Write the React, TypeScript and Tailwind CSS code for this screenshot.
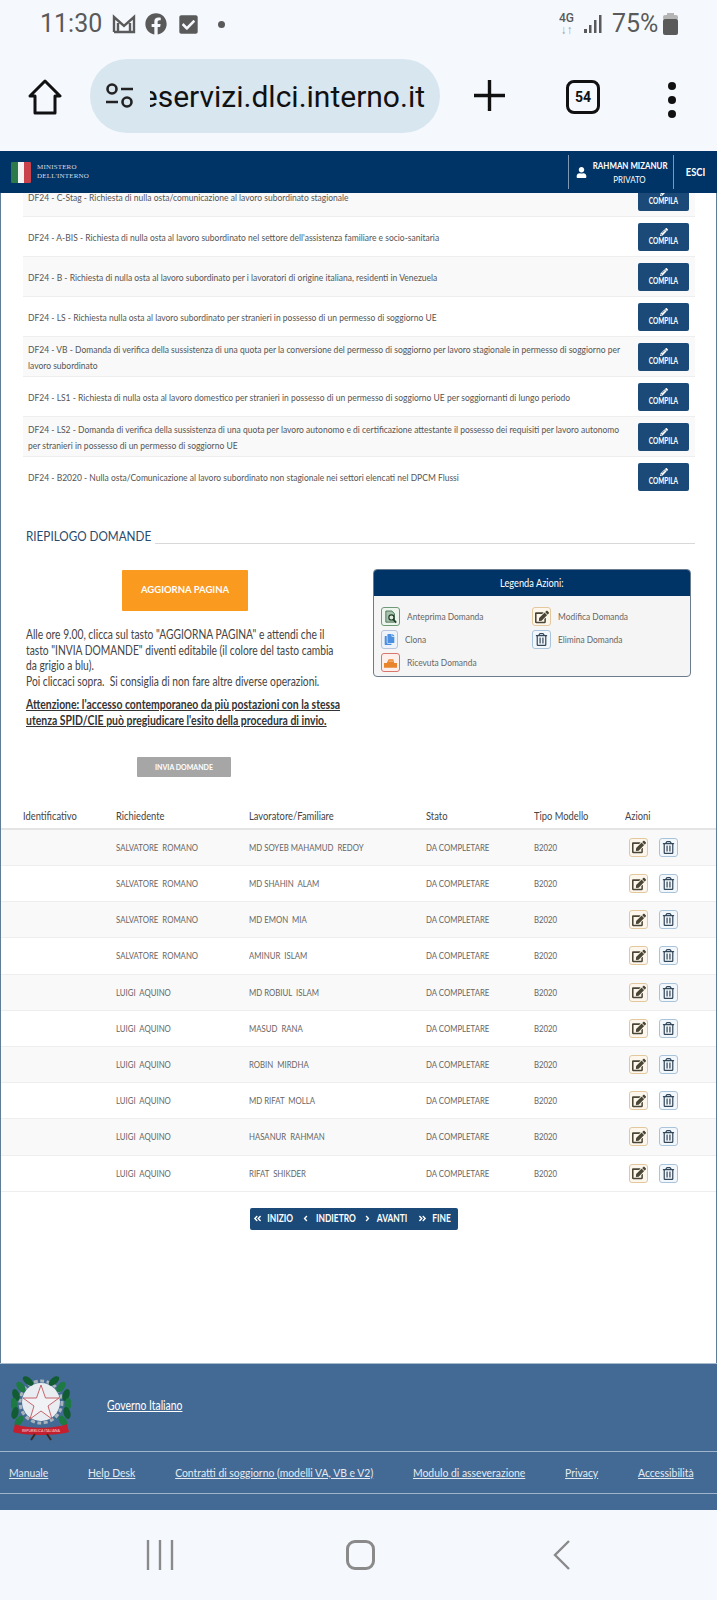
import { FaFacebook, FaCheckSquare, FaUser, FaPencilAlt, FaEdit, FaRegTrashAlt, FaAngleDoubleLeft, FaAngleDoubleRight, FaAngleLeft, FaAngleRight, FaCopy } from "react-icons/fa";

const domande = [
  { text: "DF24 - C-Stag - Richiesta di nulla osta/comunicazione al lavoro subordinato stagionale", odd: true },
  { text: "DF24 - A-BIS - Richiesta di nulla osta al lavoro subordinato nel settore dell'assistenza familiare e socio-sanitaria", odd: false },
  { text: "DF24 - B - Richiesta di nulla osta al lavoro subordinato per i lavoratori di origine italiana, residenti in Venezuela", odd: true },
  { text: "DF24 - LS - Richiesta nulla osta al lavoro subordinato per stranieri in possesso di un permesso di soggiorno UE", odd: false },
  { text: "DF24 - VB - Domanda di verifica della sussistenza di una quota per la conversione del permesso di soggiorno per lavoro stagionale in permesso di soggiorno per lavoro subordinato", odd: true },
  { text: "DF24 - LS1 - Richiesta di nulla osta al lavoro domestico per stranieri in possesso di un permesso di soggiorno UE per soggiornanti di lungo periodo", odd: false },
  { text: "DF24 - LS2 - Domanda di verifica della sussistenza di una quota per lavoro autonomo e di certificazione attestante il possesso dei requisiti per lavoro autonomo per stranieri in possesso di un permesso di soggiorno UE", odd: true },
  { text: "DF24 - B2020 - Nulla osta/Comunicazione al lavoro subordinato non stagionale nei settori elencati nel DPCM Flussi", odd: false },
];

const righe = [
  ["SALVATORE  ROMANO", "MD SOYEB MAHAMUD  REDOY"],
  ["SALVATORE  ROMANO", "MD SHAHIN  ALAM"],
  ["SALVATORE  ROMANO", "MD EMON  MIA"],
  ["SALVATORE  ROMANO", "AMINUR  ISLAM"],
  ["LUIGI  AQUINO", "MD ROBIUL  ISLAM"],
  ["LUIGI  AQUINO", "MASUD  RANA"],
  ["LUIGI  AQUINO", "ROBIN  MIRDHA"],
  ["LUIGI  AQUINO", "MD RIFAT  MOLLA"],
  ["LUIGI  AQUINO", "HASANUR  RAHMAN"],
  ["LUIGI  AQUINO", "RIFAT  SHIKDER"],
];

const footerLinks = ["Manuale", "Help Desk", "Contratti di soggiorno (modelli VA, VB e V2)", "Modulo di asseverazione", "Privacy", "Accessibilità"];

const leaves = [
  [17, 6, -50], [10, 12, -40], [5, 20, -20], [3, 29, -5], [4, 38, 15], [8, 46, 35],
  [43, 6, 50], [50, 12, 40], [55, 20, 20], [57, 29, 5], [56, 38, -15], [52, 46, -35],
];

const Emblem = () => (
  <svg viewBox="0 0 60 66" className="w-[60px] h-[66px]">
    <circle cx="30" cy="27" r="21" fill="none" stroke="#a9b3bc" strokeWidth="3" strokeDasharray="4 2.5" />
    <circle cx="30" cy="27" r="19" fill="#e9edf2" />
    <path d="M30 10 L34.5 23 L48 23 L37 31 L41 44 L30 36 L19 44 L23 31 L12 23 L25.5 23 Z" fill="#f1f2f5" stroke="#c0565c" strokeWidth="0.9" />
    {leaves.map(([x, y, r], i) => (
      <ellipse key={i} cx={x} cy={y} rx="3.4" ry="6.2" fill={i % 2 ? "#1d7a43" : "#125c33"} transform={`rotate(${r} ${x} ${y})`} />
    ))}
    <path d="M4 49 L2 57 C14 61 46 61 58 57 L56 49 C44 54 16 54 4 49 Z" fill="#c41f2e" />
    <path d="M24 59 L20 65 M36 59 L40 65" stroke="#3a2a22" strokeWidth="2" />
    <text x="30" y="57" textAnchor="middle" fontSize="3.6" fill="#f6d5d5" fontFamily="Lato, sans-serif">REPUBBLICA ITALIANA</text>
  </svg>
);

const IconBox = ({ border, bg, children, w = "w-[19px]" }: { border: string; bg: string; children: React.ReactNode; w?: string }) => (
  <span className={`flex items-center justify-center h-[19px] shrink-0 rounded-[3px] border ${w} ${border} ${bg}`}>{children}</span>
);

const EditBtn = () => (
  <IconBox border="border-[#e3c79d]" bg="bg-[#fdf6ec]">
    <FaEdit className="text-[14px] text-[#4a4636]" />
  </IconBox>
);

const TrashBtn = () => (
  <IconBox border="border-[#a9c4da]" bg="bg-[#f2f7fb]">
    <FaRegTrashAlt className="text-[13px] text-[#33475b]" />
  </IconBox>
);

// Lato is squeezed horizontally to stand in for the site's condensed face
const Label = ({ children }: { children: React.ReactNode }) => (
  <span className="origin-left scale-x-[0.84] whitespace-nowrap">{children}</span>
);

const Cell = ({ children }: { children?: React.ReactNode }) => (
  <span className="block origin-left scale-x-[0.78]">{children}</span>
);

const HeadCell = ({ children }: { children: React.ReactNode }) => (
  <span className="block origin-left scale-x-[0.85] whitespace-nowrap">{children}</span>
);

export default function App() {
  return (
    <div className="w-[717px] h-[1600px] flex flex-col overflow-hidden bg-white font-['Lato',sans-serif]">
      {/* Status bar */}
      <div className="h-[48px] shrink-0 bg-[#f5f9fe] flex items-center pl-[40px] pr-[39px] text-[#5a5a5a] font-['Roboto',sans-serif]">
        <span className="text-[25px] w-[72px]">11:30</span>
        <svg viewBox="0 0 24 20" className="w-[24px] h-[20px]" fill="none" stroke="#5a5a5a" strokeWidth="2.4">
          <path d="M2 18 V3 L12 12 L22 3 V18 H2 M6 18 V9 M18 18 V9" />
        </svg>
        <FaFacebook className="text-[22px] ml-[9px]" />
        <FaCheckSquare className="text-[21px] ml-[11px]" />
        <span className="w-[7px] h-[7px] rounded-full bg-[#5a5a5a] ml-[19px]" />
        <div className="flex-1" />
        <div className="flex flex-col items-center w-[17px] leading-none">
          <span className="text-[12px] font-medium">4G</span>
          <span className="text-[12px] text-[#9aa0a6]">↓↑</span>
        </div>
        <svg viewBox="0 0 19 20" className="w-[19px] h-[20px] ml-[9px]" fill="#5a5a5a">
          <rect x="0" y="15" width="3" height="4" />
          <rect x="5" y="11" width="2.5" height="8" />
          <rect x="10" y="6" width="2.5" height="13" />
          <rect x="15" y="1" width="2.5" height="18" />
        </svg>
        <span className="text-[25px] ml-[9px] w-[46px]">75%</span>
        <svg viewBox="0 0 15 22" className="w-[15px] h-[22px] ml-[5px]" fill="#5a5a5a">
          <rect x="4" y="0" width="7" height="3" fill="#b5b5b5" />
          <rect x="0" y="2" width="15" height="5" rx="2" fill="#b5b5b5" />
          <rect x="0" y="6" width="15" height="16" rx="2" />
        </svg>
      </div>

      {/* Browser toolbar */}
      <div className="h-[103px] shrink-0 bg-[#f5f9fe] flex items-start pt-[11px] pl-[28px]">
        <svg viewBox="0 0 34 36" className="w-[34px] h-[36px] mt-[20px]" fill="none" stroke="#111" strokeWidth="3" strokeLinejoin="round">
          <path d="M17 2 L32 17 H27 V34 H7 V17 H2 Z" />
        </svg>
        <div className="w-[350px] h-[74px] ml-[28px] rounded-[37px] bg-[#d8e6f0] flex items-center pl-[15px] shrink-0">
          <svg viewBox="0 0 29 30" className="w-[29px] h-[30px] shrink-0" fill="none" stroke="#222" strokeWidth="2.6">
            <circle cx="7" cy="8" r="4.5" />
            <path d="M16 8 H28 M1 21 H13" />
            <circle cx="22" cy="21" r="4.5" />
          </svg>
          <div className="w-[275px] ml-[16px] overflow-hidden flex justify-end whitespace-nowrap font-['Roboto',sans-serif] text-[#111] text-[30px]">
            <span className="shrink-0">eservizi.dlci.interno.it</span>
          </div>
        </div>
        <svg viewBox="0 0 31 31" className="w-[31px] h-[31px] ml-[34px] mt-[21px]" stroke="#111" strokeWidth="3.4">
          <path d="M0 15.5 H31 M15.5 0 V31" />
        </svg>
        <div className="w-[34px] h-[34px] ml-[61px] mt-[21px] rounded-[8px] border-[3px] border-[#111] flex items-center justify-center text-[14px] font-bold font-['Roboto',sans-serif] text-[#111]">
          54
        </div>
        <div className="flex flex-col gap-[6px] ml-[68px] mt-[23px]">
          <span className="w-[8px] h-[8px] rounded-full bg-[#111]" />
          <span className="w-[8px] h-[8px] rounded-full bg-[#111]" />
          <span className="w-[8px] h-[8px] rounded-full bg-[#111]" />
        </div>
      </div>

      {/* Site header */}
      <div className="h-[42px] shrink-0 bg-[#003366] flex items-center text-white relative z-10">
        <div className="w-[20px] h-[21px] ml-[11px] flex rounded-[1px] overflow-hidden">
          <span className="flex-1 bg-[#2c7a4a]" />
          <span className="flex-1 bg-[#f3f3f3]" />
          <span className="flex-1 bg-[#c9414a]" />
        </div>
        <div className="ml-[6px] font-['Liberation_Serif',serif] text-[7px] leading-[9px] text-[#d5dce6] tracking-wide">
          <div>MINISTERO</div>
          <div>DELL'INTERNO</div>
        </div>
        <div className="flex-1" />
        <div className="h-[34px] w-[106px] border-x border-[#7f99b5] flex items-center">
          <FaUser className="text-[11px] ml-[7px] shrink-0" />
          <div className="w-[93px] -ml-[4px] shrink-0 text-center text-[10px] leading-[14px] scale-x-[0.79]">
            <div className="font-bold whitespace-nowrap">RAHMAN MIZANUR</div>
            <div>PRIVATO</div>
          </div>
        </div>
        <span className="w-[43px] text-center text-[11px] font-bold scale-x-[0.85]">ESCI</span>
      </div>

      {/* Page body */}
      <main className="flex-1 min-h-0 overflow-hidden border-x border-[#5f7d96] text-[#555]">
        <div className="-mt-[16px] ml-[22px] mr-[21px] text-[10px] leading-[16px]">
          {domande.map((d) => (
            <div key={d.text} className={`h-[40px] flex items-center justify-between pl-[5px] pr-[6px] border-b border-[#eeeeee] last:border-b-0 ${d.odd ? "bg-[#f9f9f9]" : "bg-white"}`}>
              <div className="w-[597px] shrink-0">
                <span className="block w-[702px] origin-left scale-x-[0.85]">{d.text}</span>
              </div>
              <button className="w-[51px] h-[28px] rounded-[2px] bg-[#1b4a78] text-white text-[9px] leading-[10px] font-bold flex flex-col items-center justify-center shrink-0">
                <FaPencilAlt className="text-[8px]" />
                <span className="scale-x-[0.72]">COMPILA</span>
              </button>
            </div>
          ))}
        </div>

        {/* Riepilogo */}
        <div className="ml-[25px] mr-[21px] mt-[31px] flex items-end h-[17px]">
          <h2 className="w-[129px] shrink-0 text-[13px] leading-[17px] text-[#2a4a6b] whitespace-nowrap origin-left scale-x-[0.9]">RIEPILOGO DOMANDE</h2>
          <div className="flex-1 h-px bg-[#d8d8d8] mb-[1px]" />
        </div>

        <div className="flex items-start ml-[25px] mt-[25px]">
          <div className="w-[322px] shrink-0">
            <button className="ml-[96px] w-[126px] h-[41px] bg-[#fa9a1e] rounded-[1px] text-white text-[9.5px] font-bold">AGGIORNA PAGINA</button>
            <p className="mt-[16px] w-[385px] origin-left scale-x-[0.82] text-[12.5px] leading-[15.7px] text-[#444]">
              Alle ore 9.00, clicca sul tasto "AGGIORNA PAGINA" e attendi che il tasto "INVIA DOMANDE" diventi editabile (il colore del tasto cambia da grigio a blu).
              <br />
              Poi cliccaci sopra.&nbsp; Si consiglia di non fare altre diverse operazioni.
            </p>
            <p className="mt-[7px] w-[381px] origin-left scale-x-[0.835] text-[12.5px] leading-[16px] font-bold underline text-[#333]">
              Attenzione: l'accesso contemporaneo da più postazioni con la stessa utenza SPID/CIE può pregiudicare l'esito della procedura di invio.
            </p>
            <button className="mt-[28px] ml-[111px] w-[94px] h-[20px] bg-[#a6a6a6] rounded-[1px] text-white text-[7px] font-bold">INVIA DOMANDE</button>
          </div>

          <div className="w-[318px] h-[108px] ml-[25px] -mt-px rounded-[4px] border border-[#6a7c8e] bg-[#f5f5f5] overflow-hidden text-[10px] text-[#666]">
            <div className="h-[26px] bg-[#003366] text-white text-[11px] flex items-center justify-center">
              <span className="scale-x-[0.84]">Legenda Azioni:</span>
            </div>
            <div className="grid grid-cols-[151px_1fr] gap-y-[4px] pl-[7px] pt-[11px]">
              <div className="flex items-center gap-[7px]">
                <IconBox border="border-[#6f9a78]" bg="bg-[#eef5ee]">
                  <svg viewBox="0 0 14 16" className="w-[12px] h-[14px]">
                    <path d="M1 1 H8 L11 4 V14 H1 Z" fill="#a9c2ad" stroke="#3c6a48" />
                    <circle cx="7.5" cy="8.5" r="3" fill="#dfeadf" stroke="#1f3d28" strokeWidth="1.4" />
                    <path d="M9.5 10.5 L13 14.5" stroke="#1f3d28" strokeWidth="2" />
                  </svg>
                </IconBox>
                <Label>Anteprima Domanda</Label>
              </div>
              <div className="flex items-center gap-[7px]">
                <EditBtn />
                <Label>Modifica Domanda</Label>
              </div>
              <div className="flex items-center gap-[7px]">
                <IconBox border="border-[#b6c4de]" bg="bg-[#eef3fa]" w="w-[17px]">
                  <FaCopy className="text-[11px] text-[#4a8fe0]" />
                </IconBox>
                <Label>Clona</Label>
              </div>
              <div className="flex items-center gap-[7px]">
                <TrashBtn />
                <Label>Elimina Domanda</Label>
              </div>
              <div className="flex items-center gap-[7px]">
                <IconBox border="border-[#d9766c]" bg="bg-[#fdf0ec]">
                  <svg viewBox="0 0 14 10" className="w-[13px] h-[10px]">
                    <path d="M0 5 H3 L5 1 H10 L11 5 H14 V10 H0 Z" fill="#e8842c" />
                    <path d="M5 3 H10" stroke="#f6c48f" />
                  </svg>
                </IconBox>
                <Label>Ricevuta Domanda</Label>
              </div>
            </div>
          </div>
        </div>

        {/* Tabella */}
        <div className="mt-[27px] text-[10px]">
          <div className="h-[26px] grid grid-cols-[93px_133px_177px_108px_91px_1fr] pl-[22px] items-center border-b-2 border-[#e4e4e4] text-[11px] text-[#444]">
            <HeadCell>Identificativo</HeadCell>
            <HeadCell>Richiedente</HeadCell>
            <HeadCell>Lavoratore/Familiare</HeadCell>
            <HeadCell>Stato</HeadCell>
            <HeadCell>Tipo Modello</HeadCell>
            <HeadCell>Azioni</HeadCell>
          </div>
          {righe.map((r, i) => (
            <div key={i} className={`h-[36.2px] grid grid-cols-[93px_133px_177px_108px_91px_1fr] pl-[22px] items-center border-b border-[#eeeeee] text-[#666] whitespace-pre ${i % 2 === 0 ? "bg-[#f9f9f9]" : "bg-white"}`}>
              <Cell />
              <Cell>{r[0]}</Cell>
              <Cell>{r[1]}</Cell>
              <Cell>DA COMPLETARE</Cell>
              <Cell>B2020</Cell>
              <span className="flex items-center gap-[11px] pl-[4px]">
                <EditBtn />
                <TrashBtn />
              </span>
            </div>
          ))}
        </div>

        {/* Paginazione */}
        <div className="mt-[16px] ml-[249px] flex h-[22px] text-white text-[10.5px] font-bold">
          <button className="w-[50px] bg-[#1b4a78] rounded-l-[2px] flex items-center justify-center gap-[2px]"><FaAngleDoubleLeft className="text-[9px]" /><span className="scale-x-[0.8]">INIZIO</span></button>
          <button className="w-[62px] bg-[#1b4a78] flex items-center justify-center gap-[1px]"><FaAngleLeft className="text-[9px]" /><span className="scale-x-[0.8]">INDIETRO</span></button>
          <button className="w-[51px] bg-[#1b4a78] flex items-center justify-center gap-[1px]"><FaAngleRight className="text-[9px]" /><span className="scale-x-[0.8]">AVANTI</span></button>
          <button className="w-[45px] bg-[#1b4a78] rounded-r-[2px] flex items-center justify-center gap-[3px]"><FaAngleDoubleRight className="text-[9px]" /><span className="scale-x-[0.8]">FINE</span></button>
        </div>
      </main>

      {/* Footer */}
      <footer className="h-[147px] shrink-0 bg-[#436a94] border-t border-[#a9bccd] text-white overflow-hidden">
        <div className="h-[87px] flex items-center pl-[11px]">
          <Emblem />
          <a className="ml-[36px] -mt-[3px] text-[12.5px] underline origin-left scale-x-[0.83]">Governo Italiano</a>
        </div>
        <div className="h-[43px] border-y border-[#9fb5ca] flex items-center text-[12px] text-[#e3eaf2]">
          <div className="w-[829px] shrink-0 flex gap-[46px] pl-[10.4px] origin-left scale-x-[0.865]">
            {footerLinks.map((l) => (
              <a key={l} className="underline whitespace-nowrap">{l}</a>
            ))}
          </div>
        </div>
      </footer>

      {/* Android nav bar */}
      <div className="h-[90px] shrink-0 bg-[#f5f9fe] flex items-start pt-[30px]">
        <svg viewBox="0 0 28 30" className="w-[28px] h-[30px] ml-[146px]" stroke="#8a8a8a" strokeWidth="2.4">
          <path d="M2 0 V30 M14 0 V30 M26 0 V30" />
        </svg>
        <div className="w-[29px] h-[30px] ml-[172px] rounded-[9px] border-[3px] border-[#8a8a8a]" />
        <svg viewBox="0 0 18 30" className="w-[18px] h-[30px] ml-[178px]" fill="none" stroke="#8a8a8a" strokeWidth="2.4">
          <path d="M16 1 L2 15 L16 29" />
        </svg>
      </div>
    </div>
  );
}
